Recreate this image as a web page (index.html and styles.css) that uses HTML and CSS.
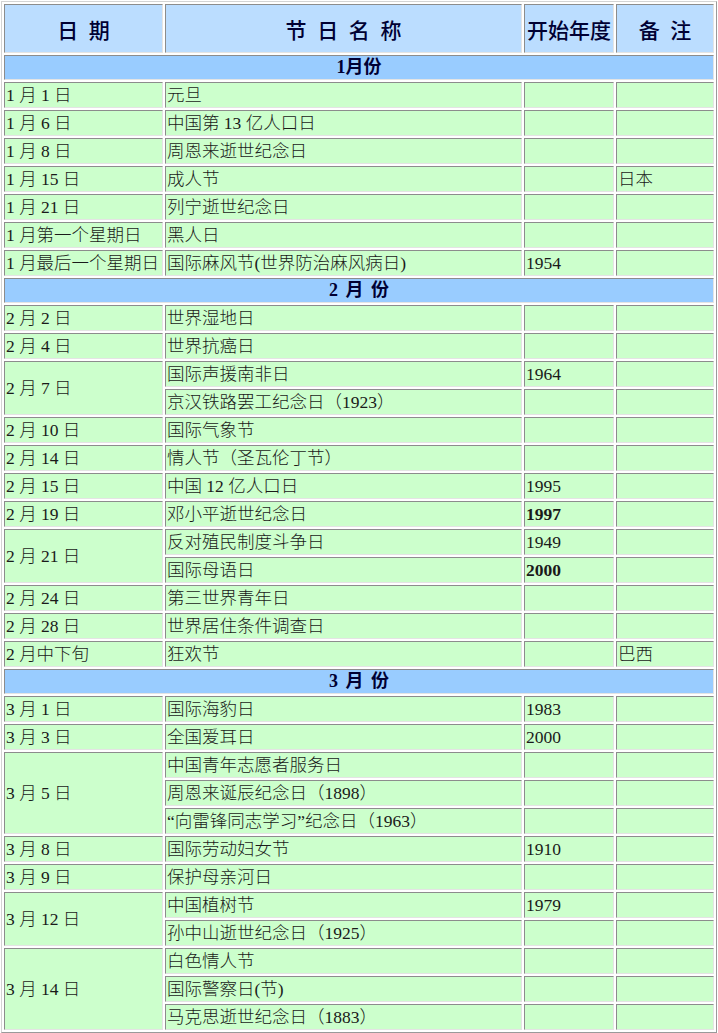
FILE: index.html
```html
<!DOCTYPE html>
<html lang="zh-CN">
<head>
<meta charset="utf-8">
<title>节日表</title>
<link rel="stylesheet" href="styles.css">
</head>
<body>
<table class="fest">
  <colgroup>
    <col class="c-date">
    <col class="c-name">
    <col class="c-year">
    <col class="c-note">
  </colgroup>
  <thead>
    <tr class="head">
      <th>日 期</th>
      <th>节 日 名 称</th>
      <th>开始年度</th>
      <th>备 注</th>
    </tr>
  </thead>
  <tbody>
    <tr class="month"><td colspan="4">1月份</td></tr>
    <tr><td>1 月 1 日</td><td>元旦</td><td></td><td></td></tr>
    <tr><td>1 月 6 日</td><td>中国第 13 亿人口日</td><td></td><td></td></tr>
    <tr><td>1 月 8 日</td><td>周恩来逝世纪念日</td><td></td><td></td></tr>
    <tr><td>1 月 15 日</td><td>成人节</td><td></td><td>日本</td></tr>
    <tr><td>1 月 21 日</td><td>列宁逝世纪念日</td><td></td><td></td></tr>
    <tr><td>1 月第一个星期日</td><td>黑人日</td><td></td><td></td></tr>
    <tr><td>1 月最后一个星期日</td><td>国际麻风节(世界防治麻风病日)</td><td>1954</td><td></td></tr>

    <tr class="month"><td colspan="4">2 月 份</td></tr>
    <tr><td>2 月 2 日</td><td>世界湿地日</td><td></td><td></td></tr>
    <tr><td>2 月 4 日</td><td>世界抗癌日</td><td></td><td></td></tr>
    <tr><td rowspan="2">2 月 7 日</td><td>国际声援南非日</td><td>1964</td><td></td></tr>
    <tr><td>京汉铁路罢工纪念日（1923）</td><td></td><td></td></tr>
    <tr><td>2 月 10 日</td><td>国际气象节</td><td></td><td></td></tr>
    <tr><td>2 月 14 日</td><td>情人节（圣瓦伦丁节）</td><td></td><td></td></tr>
    <tr><td>2 月 15 日</td><td>中国 12 亿人口日</td><td>1995</td><td></td></tr>
    <tr><td>2 月 19 日</td><td>邓小平逝世纪念日</td><td class="b">1997</td><td></td></tr>
    <tr><td rowspan="2">2 月 21 日</td><td>反对殖民制度斗争日</td><td>1949</td><td></td></tr>
    <tr><td>国际母语日</td><td class="b">2000</td><td></td></tr>
    <tr><td>2 月 24 日</td><td>第三世界青年日</td><td></td><td></td></tr>
    <tr><td>2 月 28 日</td><td>世界居住条件调查日</td><td></td><td></td></tr>
    <tr><td>2 月中下旬</td><td>狂欢节</td><td></td><td>巴西</td></tr>

    <tr class="month"><td colspan="4">3 月 份</td></tr>
    <tr><td>3 月 1 日</td><td>国际海豹日</td><td>1983</td><td></td></tr>
    <tr><td>3 月 3 日</td><td>全国爱耳日</td><td>2000</td><td></td></tr>
    <tr><td rowspan="3">3 月 5 日</td><td>中国青年志愿者服务日</td><td></td><td></td></tr>
    <tr><td>周恩来诞辰纪念日（1898）</td><td></td><td></td></tr>
    <tr><td>“向雷锋同志学习”纪念日（1963）</td><td></td><td></td></tr>
    <tr><td>3 月 8 日</td><td>国际劳动妇女节</td><td>1910</td><td></td></tr>
    <tr><td>3 月 9 日</td><td>保护母亲河日</td><td></td><td></td></tr>
    <tr><td rowspan="2">3 月 12 日</td><td>中国植树节</td><td>1979</td><td></td></tr>
    <tr><td>孙中山逝世纪念日（1925）</td><td></td><td></td></tr>
    <tr><td rowspan="3">3 月 14 日</td><td>白色情人节</td><td></td><td></td></tr>
    <tr><td>国际警察日(节)</td><td></td><td></td></tr>
    <tr><td>马克思逝世纪念日（1883）</td><td></td><td></td></tr>
  </tbody>
</table>
</body>
</html>
```
FILE: styles.css
```css
html, body {
  margin: 0;
  padding: 0;
  background: #ffffff;
}

body {
  font-family: "Liberation Serif", "Noto Sans CJK SC", serif;
  color: #1a1a1a;
}

.fest {
  margin: 1px 0 0 1px;
  width: 716px;
  table-layout: fixed;
  border-collapse: separate;
  border-spacing: 2px;
  border: 1px solid;
  border-color: #d4d4d4 #9a9a9a #9a9a9a #d4d4d4;
}

.c-date { width: 159px; }
.c-name { width: 357px; }
.c-year { width: 90px; }
.c-note { width: 98px; }

.fest th,
.fest td {
  border: 1px solid;
  border-color: #8c8c8c #e4e4e4 #e4e4e4 #8c8c8c;
  padding: 0 1px;
  white-space: nowrap;
  overflow: hidden;
}

.fest td {
  height: 24px;
  background: #ccffcc;
  font-size: 17.5px;
  font-weight: 300;
  line-height: 24px;
  text-align: left;
  vertical-align: middle;
}

.fest .head th {
  height: 47px;
  background: #bbddff;
  color: #000033;
  font-family: "Noto Sans CJK SC", sans-serif;
  font-size: 21px;
  font-weight: 500;
  word-spacing: 6px;
  text-align: center;
  vertical-align: middle;
}

.fest .month td {
  height: 23px;
  line-height: 23px;
  background: #99ccff;
  color: #000033;
  font-weight: bold;
  font-size: 18px;
  word-spacing: 3px;
  text-align: center;
}

.fest td.b {
  font-weight: bold;
}
```
